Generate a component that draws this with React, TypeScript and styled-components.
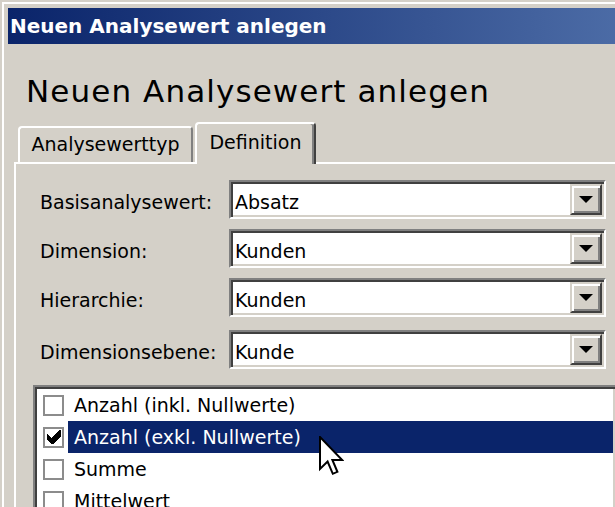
import React from "react";
import styled, { createGlobalStyle } from "styled-components";

const Global = createGlobalStyle`
  html, body {
    margin: 0;
    padding: 0;
    width: 615px;
    height: 507px;
    overflow: hidden;
    background: #d4d0c8;
  }
  * { box-sizing: border-box; }
  body {
    font-family: "DejaVu Sans", Verdana, sans-serif;
    color: #000;
  }
`;

const Window = styled.div`
  position: relative;
  width: 640px;
  min-height: 540px;
  padding: 8px 0 0 8px;
  background: #d4d0c8;
  box-shadow: inset 2px 2px 0 #d4d0c8, inset 4px 4px 0 #ffffff;
  display: flex;
  flex-direction: column;
`;

const TitleBar = styled.div`
  height: 36px;
  display: flex;
  align-items: center;
  padding-left: 2px;
  background: linear-gradient(to right, #0a246a 0%, #4e6ea8 100%);
`;

const TitleText = styled.span`
  font-size: 20px;
  font-weight: bold;
  line-height: 1;
  color: #ffffff;
`;

const Content = styled.div`
  display: flex;
  flex-direction: column;
  padding-left: 6px;
`;

const Heading = styled.h1`
  margin: 29px 0 0 0;
  padding-left: 12px;
  font-size: 31px;
  font-weight: normal;
  letter-spacing: 1.1px;
  line-height: 36px;
`;

const TabStrip = styled.div`
  margin-top: 13px;
  height: 40px;
  display: flex;
  align-items: flex-end;
  gap: 2px;
  padding-left: 4px;
`;

const Tab = styled.div<{ $active?: boolean }>`
  position: relative;
  z-index: 1;
  width: ${(p) => (p.$active ? 121 : 175)}px;
  height: ${(p) => (p.$active ? 42 : 36)}px;
  margin-bottom: ${(p) => (p.$active ? -2 : 0)}px;
  padding-top: ${(p) => (p.$active ? 7 : 5)}px;
  background: #d4d0c8;
  border-top: 2px solid #ffffff;
  border-left: 2px solid #ffffff;
  border-right: 2px solid ${(p) => (p.$active ? "#404040" : "#808080")};
  border-radius: 4px 4px 0 0;
  box-shadow: ${(p) => (p.$active ? "inset -2px 0 0 #808080" : "none")};
  font-size: 19px;
  line-height: 22px;
  text-align: center;
`;

const Panel = styled.div`
  border-top: 2px solid #ffffff;
  border-left: 2px solid #ffffff;
  padding: 16px 0 40px 17px;
  display: flex;
  flex-direction: column;
`;

const FormList = styled.div`
  display: flex;
  flex-direction: column;
  gap: 10px;
  padding-left: 7px;
`;

const FormRow = styled.div<{ $extra?: boolean }>`
  display: flex;
  align-items: center;
  margin-top: ${(p) => (p.$extra ? 3 : 0)}px;
`;

const Label = styled.div`
  width: 189px;
  padding-top: 5px;
  font-size: 19px;
  line-height: 22px;
  white-space: nowrap;
`;

const Combo = styled.div`
  width: 377px;
  height: 39px;
  display: flex;
  padding: 2px;
  background: #ffffff;
  border: 2px solid;
  border-color: #808080 #ffffff #ffffff #808080;
  box-shadow: inset 2px 2px 0 #404040, inset -2px -2px 0 #d4d0c8;
`;

const ComboValue = styled.div`
  flex: 1;
  display: flex;
  align-items: center;
  padding: 5px 0 0 2px;
  font-size: 19px;
  line-height: 22px;
`;

const DropButton = styled.div`
  width: 32px;
  height: 31px;
  display: flex;
  align-items: center;
  justify-content: center;
  background: #d4d0c8;
  border: 2px solid;
  border-color: #d4d0c8 #404040 #404040 #d4d0c8;
  box-shadow: inset 2px 2px 0 #ffffff, inset -2px -2px 0 #808080;
`;

const ListBox = styled.div`
  margin-top: 16px;
  width: 584px;
  padding: 2px;
  background: #ffffff;
  border: 2px solid;
  border-color: #808080 #ffffff #ffffff #808080;
  box-shadow: inset 2px 2px 0 #404040, inset -2px -2px 0 #d4d0c8;
  display: flex;
  flex-direction: column;
`;

const ListRow = styled.div`
  height: 32px;
  display: flex;
  align-items: center;
  padding-left: 6px;
`;

const CheckBox = styled.div`
  width: 21px;
  height: 21px;
  margin-right: 4px;
  flex: none;
  display: flex;
  align-items: center;
  justify-content: center;
  background: #ffffff;
  border: 2px solid #8c8c8c;
`;

const ItemLabel = styled.div<{ $selected?: boolean }>`
  flex: 1;
  align-self: stretch;
  display: flex;
  align-items: center;
  padding-left: 6px;
  font-size: 19px;
  line-height: 22px;
  white-space: nowrap;
  background: ${(p) => (p.$selected ? "#0a246a" : "transparent")};
  color: ${(p) => (p.$selected ? "#ffffff" : "#000000")};
`;

const Cursor = styled.svg`
  position: absolute;
  left: 319px;
  top: 436px;
  z-index: 5;
`;

const DownArrow = () => (
  <svg width="14" height="7" viewBox="0 0 14 7">
    <polygon points="0,0 14,0 7,7" fill="#000" />
  </svg>
);

const CheckMark = () => (
  <svg width="14" height="14" viewBox="0 0 7 7" shapeRendering="crispEdges">
    <polygon points="0,2 2,4 6,0 7,0 7,3 3,7 2,7 0,5" fill="#000" />
  </svg>
);

const fields = [
  { label: "Basisanalysewert:", value: "Absatz" },
  { label: "Dimension:", value: "Kunden" },
  { label: "Hierarchie:", value: "Kunden" },
  { label: "Dimensionsebene:", value: "Kunde", extra: true },
];

const items = [
  { text: "Anzahl (inkl. Nullwerte)", checked: false, selected: false },
  { text: "Anzahl (exkl. Nullwerte)", checked: true, selected: true },
  { text: "Summe", checked: false, selected: false },
  { text: "Mittelwert", checked: false, selected: false },
];

export default function App() {
  return (
    <>
      <Global />
      <Window>
        <TitleBar>
          <TitleText>Neuen Analysewert anlegen</TitleText>
        </TitleBar>
        <Content>
          <Heading>Neuen Analysewert anlegen</Heading>
          <TabStrip>
            <Tab>Analysewerttyp</Tab>
            <Tab $active>Definition</Tab>
          </TabStrip>
          <Panel>
            <FormList>
              {fields.map((f) => (
                <FormRow key={f.label} $extra={f.extra}>
                  <Label>{f.label}</Label>
                  <Combo>
                    <ComboValue>{f.value}</ComboValue>
                    <DropButton>
                      <DownArrow />
                    </DropButton>
                  </Combo>
                </FormRow>
              ))}
            </FormList>
            <ListBox>
              {items.map((it) => (
                <ListRow key={it.text}>
                  <CheckBox>{it.checked && <CheckMark />}</CheckBox>
                  <ItemLabel $selected={it.selected}>{it.text}</ItemLabel>
                </ListRow>
              ))}
            </ListBox>
          </Panel>
        </Content>
        <Cursor width="25" height="42" viewBox="0 0 12.5 21">
          <path
            d="M0.5 0.5 V16.5 L4.3 12.8 L6.9 18.9 L9.2 17.9 L6.7 12 H11.6 Z"
            fill="#ffffff"
            stroke="#000000"
            strokeWidth="1"
            strokeLinejoin="miter"
          />
        </Cursor>
      </Window>
    </>
  );
}
